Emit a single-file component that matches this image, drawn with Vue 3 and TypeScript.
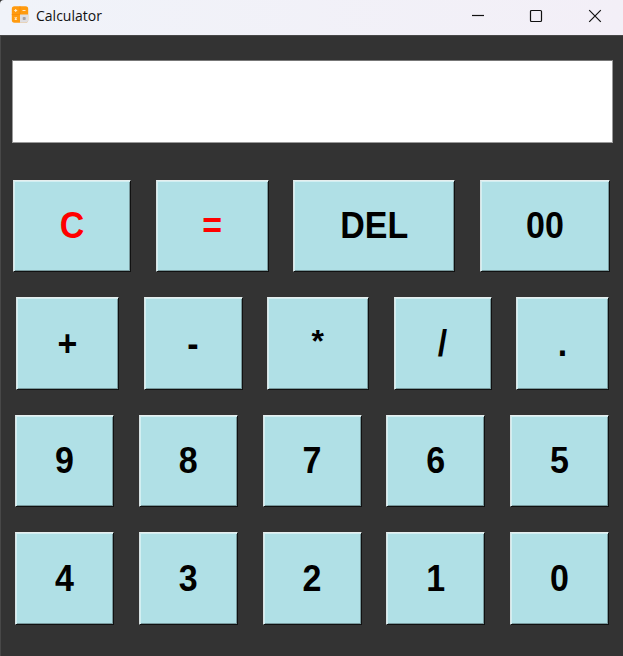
<script setup lang="ts">
import { ref } from 'vue'

interface Key {
  label: string
  width: number
  accent?: boolean
}

interface Row {
  name: string
  keys: Key[]
}

const rows: Row[] = [
  {
    name: 'actions',
    keys: [
      { label: 'C', width: 118, accent: true },
      { label: '=', width: 113, accent: true },
      { label: 'DEL', width: 162 },
      { label: '00', width: 130 },
    ],
  },
  {
    name: 'operators',
    keys: [
      { label: '+', width: 103 },
      { label: '-', width: 99 },
      { label: '*', width: 102 },
      { label: '/', width: 98 },
      { label: '.', width: 93 },
    ],
  },
  { name: 'upper', keys: ['9', '8', '7', '6', '5'].map((label) => ({ label, width: 99 })) },
  { name: 'lower', keys: ['4', '3', '2', '1', '0'].map((label) => ({ label, width: 99 })) },
]

const display = ref('')

function evaluate(source: string): string {
  const tokens = source.match(/\d*\.?\d+|[-+*/]/g) ?? []
  const terms: number[] = []
  let operator = '+'
  for (const token of tokens) {
    if (/^[-+*/]$/.test(token)) {
      operator = token
      continue
    }
    const value = Number(token)
    if (operator === '+') terms.push(value)
    else if (operator === '-') terms.push(-value)
    else if (operator === '*') terms.push((terms.pop() ?? 0) * value)
    else terms.push((terms.pop() ?? 0) / value)
  }
  return tokens.length ? String(terms.reduce((sum, term) => sum + term, 0)) : ''
}

function press(label: string): void {
  if (label === 'C') display.value = ''
  else if (label === 'DEL') display.value = display.value.slice(0, -1)
  else if (label === '=') display.value = evaluate(display.value)
  else display.value += label
}
</script>

<template>
  <div class="window">
    <header class="titlebar">
      <svg class="app-icon" width="18" height="18" viewBox="0 0 18 18">
        <rect x="0.8" y="0.3" width="16.4" height="16.4" rx="2.6" fill="#ff9b0f" />
        <path d="M9 0.3V9M0.8 8.5H9" stroke="#f98a06" stroke-width="0.8" />
        <path d="M9 8.5H17.2V14.1A2.6 2.6 0 0 1 14.6 16.7H9Z" fill="#dedee2" />
        <path d="M3.2 4.5H6.2M4.7 3V6M11.5 4.5H14.5M3.7 11.4L5.8 13.5M5.8 11.4L3.7 13.5" stroke="#ffe9c8" stroke-width="1.1" />
        <rect x="11.7" y="11" width="3" height="3" rx="0.8" fill="#a2a2a8" />
      </svg>
      <span class="title">Calculator</span>
      <div class="controls">
        <svg width="14" height="14" viewBox="0 0 14 14"><path d="M1 6.5H13" /></svg>
        <svg width="14" height="14" viewBox="0 0 14 14"><rect x="1.5" y="1.5" width="11" height="11" rx="1" /></svg>
        <svg class="close" width="14" height="14" viewBox="0 0 14 14"><path d="M1.2 1.2L12.8 12.8M12.8 1.2L1.2 12.8" /></svg>
      </div>
    </header>
    <main class="body">
      <div class="display">{{ display }}</div>
      <div class="keypad">
        <div v-for="row in rows" :key="row.name" class="row" :class="row.name">
          <button
            v-for="key in row.keys"
            :key="key.label"
            type="button"
            class="key"
            :class="{ accent: key.accent, star: key.label === '*' }"
            :style="{ width: key.width + 'px' }"
            @click="press(key.label)"
          >
            <span class="label">{{ key.label }}</span>
          </button>
        </div>
      </div>
    </main>
  </div>
</template>

<style>
body {
  background: #333;
}
</style>

<style scoped>
.window {
  box-sizing: border-box;
  width: 623px;
  height: 656px;
  display: flex;
  flex-direction: column;
  overflow: hidden;
  background: #333;
}

.titlebar {
  box-sizing: border-box;
  flex: none;
  height: 35px;
  display: flex;
  align-items: center;
  padding: 0 21px 4px 11px;
  border-top-left-radius: 4px;
  background: linear-gradient(90deg, #f0f3f9, #f3eff7);
}

.app-icon {
  display: block;
  margin-top: -2px;
}

.title {
  margin-left: 7px;
  color: #111;
  font: 14px/20px "Open Sans", "Noto Sans", sans-serif;
}

.controls {
  display: flex;
  gap: 44px;
  margin-left: auto;
}

.controls svg {
  display: block;
  fill: none;
  stroke: #111;
  stroke-width: 1.2;
}

.controls .close {
  margin-left: 1px;
}

.body {
  box-sizing: border-box;
  flex: 1;
  padding: 24px 9px 0 11px;
  border-left: 1px solid #484848;
  border-top: 1px solid #484848;
}

.display {
  box-sizing: border-box;
  width: 601px;
  height: 83px;
  padding: 0 4px;
  overflow: hidden;
  border: 1px solid #9a9a9a;
  border-top-color: #777;
  background: #fff;
  color: #000;
  font: bold 34px/81px "Liberation Sans", Arial, sans-serif;
  text-align: right;
}

.keypad {
  display: grid;
  grid-template-rows: 92px 93px 92px 93px;
  gap: 25px;
  margin-top: 37px;
}

.row {
  display: flex;
  justify-content: space-between;
}

.actions {
  padding: 0 4px 0 1px;
}

.operators {
  padding: 0 5px 0 4px;
}

.upper,
.lower {
  padding: 0 5px 0 3px;
}

.key {
  box-sizing: border-box;
  height: 100%;
  padding: 0 0 2px;
  border: 1px solid;
  border-color: #e6eeee #111 #111 #d8e2e3;
  border-radius: 0;
  background: #b0e0e6;
  box-shadow: inset 1px 1px #d2eff2, inset -1px -1px #78999d;
  color: #000;
  font: bold 34px/1 "Liberation Sans", Arial, sans-serif;
  text-align: center;
}

.label {
  display: inline-block;
  transform: scaleY(1.06);
}

.star .label {
  transform: translateY(-2px) scale(0.94);
}

.accent {
  color: #f00;
}
</style>
